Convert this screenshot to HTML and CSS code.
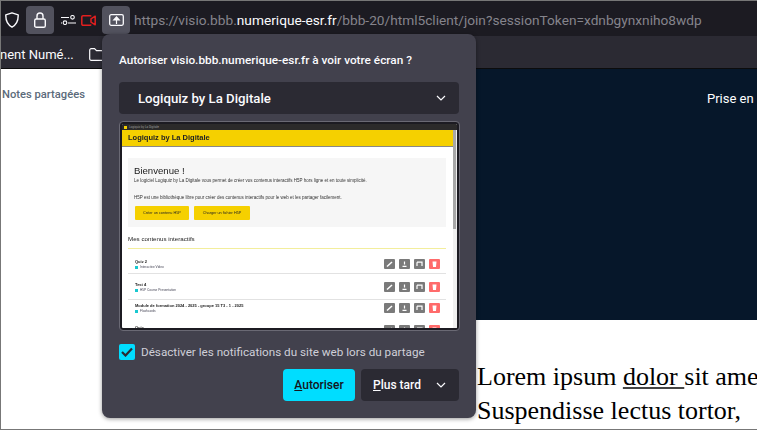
FILE: index.html
```html
<!DOCTYPE html>
<html lang="fr">
<head>
  <meta charset="UTF-8" />
  <title>Partage d'écran</title>
  <link rel="stylesheet" href="styles.css">
</head>
<body>
<svg class="defs" width="0" height="0">
  <symbol id="i-edit" viewBox="0 0 11 10"><path d="M3 7.5 L8 3" stroke="#fff" stroke-width="1.5"/></symbol>
  <symbol id="i-down" viewBox="0 0 11 10"><path d="M5.5 2.5 V5.5 M3.5 7.3 H7.5" stroke="#fff" stroke-width="1.2"/></symbol>
  <symbol id="i-view" viewBox="0 0 11 10"><path d="M3 3.2 H8 V7 M3 7 V3.2" stroke="#fff" stroke-width="1.2" fill="none"/></symbol>
  <symbol id="i-del" viewBox="0 0 11 10"><path d="M3.5 2.5 H7.5 L7 8 H4 Z" fill="#fff"/></symbol>
</svg>
<div class="window">
  <div class="toolbar">
    <svg class="shield" width="14" height="16" viewBox="0 0 14 16"><path d="M7 .8 L13.2 2.8 C13.4 8.5 11.5 12.8 7 15.2 C2.5 12.8 .6 8.5 .8 2.8 Z" fill="none" stroke="#fbfbfe" stroke-width="1.4" stroke-linejoin="round"/></svg>
    <div class="tool-btn lock-btn">
      <svg width="12" height="16" viewBox="0 0 12 16"><path d="M3 7 V4 a3 3 0 0 1 6 0 V7" fill="none" stroke="#fbfbfe" stroke-width="1.4"/><rect x=".7" y="7" width="10.6" height="8.3" rx="1.6" fill="none" stroke="#fbfbfe" stroke-width="1.4"/></svg>
    </div>
    <svg class="perm" width="15" height="10" viewBox="0 0 15 10"><path d="M0 2.5 H8 M0 8 H1 M7 8 H15" stroke="#fbfbfe" stroke-width="1.2" fill="none"/><circle cx="11.5" cy="2.3" r="1.8" fill="none" stroke="#fbfbfe" stroke-width="1.1"/><circle cx="4" cy="7.7" r="1.8" fill="none" stroke="#fbfbfe" stroke-width="1.1"/></svg>
    <svg class="cam" width="15" height="11" viewBox="0 0 15 11"><path d="M10 1.5 A1 1 0 0 0 9 .8 H2 A1.2 1.2 0 0 0 .8 2 V9 A1.2 1.2 0 0 0 2 10.2 H9 A1 1 0 0 0 10 9.5 M10 3.8 L14.2 1.2 V9.8 L10 7.2 Z" fill="none" stroke="#e21f1f" stroke-width="1.5" stroke-linejoin="round"/></svg>
    <div class="tool-btn share-btn">
      <svg width="15" height="12" viewBox="0 0 15 12"><rect x=".7" y=".7" width="13.6" height="10.6" rx="1.5" fill="none" stroke="#fbfbfe" stroke-width="1.3"/><path d="M7.5 10 V5.5 M4.8 6 L7.5 3 L10.2 6 Z" stroke="#fbfbfe" stroke-width="1.2" fill="#fbfbfe"/></svg>
    </div>
    <div class="url">https://visio.bbb.<span class="host">numerique-esr.fr</span>/bbb-20/html5client/join?sessionToken=xdnbgynxniho8wdp</div>
  </div>

  <div class="bookmarks">
    <span class="bookmark">nent Numé...</span>
    <svg class="folder" width="15" height="13" viewBox="0 0 15 13"><path d="M.7 2.2 A1.5 1.5 0 0 1 2.2 .7 H5.5 L7.5 2.7 H12.8 A1.5 1.5 0 0 1 14.3 4.2 V10.8 A1.5 1.5 0 0 1 12.8 12.3 H2.2 A1.5 1.5 0 0 1 .7 10.8 Z" fill="none" stroke="#fbfbfe" stroke-width="1.2"/></svg>
  </div>

  <div class="page">
    <div class="sidebar">Notes partagées</div>
    <div class="main">
      <div class="banner"><span class="banner-text">Prise en</span></div>
      <div class="lorem">
        <p>Lorem ipsum <u>dolor </u>sit amet</p>
        <p>Suspendisse lectus tortor,</p>
      </div>
    </div>
  </div>

  <div class="popup">
    <h1>Autoriser visio.bbb.numerique-esr.fr à voir votre écran ?</h1>
    <div class="select">
      <span>Logiquiz by La Digitale</span>
      <svg width="10" height="6" viewBox="0 0 10 6"><path d="M1 1 L5 5 L9 1" fill="none" stroke="#fbfbfe" stroke-width="1.2"/></svg>
    </div>

    <div class="preview">
      <div class="pv-title"><i></i><span>Logiquiz by La Digitale</span></div>
      <div class="pv-body">
        <div class="pv-content">
          <div class="pv-head">Logiquiz by La Digitale</div>
          <div class="pv-hero">
            <div class="pv-welcome">Bienvenue !</div>
            <div class="pv-line">Le logiciel Logiquiz by La Digitale vous permet de créer vos contenus interactifs H5P hors ligne et en toute simplicité.</div>
            <div class="pv-line pv-line2">H5P est une bibliothèque libre pour créer des contenus interactifs pour le web et les partager facilement.</div>
            <div class="pv-actions">
              <span class="pv-cta">Créer un contenu H5P</span>
              <span class="pv-cta pv-cta-wide">Charger un fichier H5P</span>
            </div>
          </div>
          <div class="pv-sub">Mes contenus interactifs</div>
          <div class="pv-row pv-row1">
            <div class="pv-info"><b>Quiz 2</b><em>Interactive Video</em></div>
            <div class="pv-btns">
              <s><svg><use href="#i-edit"/></svg></s><s><svg><use href="#i-down"/></svg></s><s><svg><use href="#i-view"/></svg></s><s class="del"><svg><use href="#i-del"/></svg></s>
            </div>
          </div>
          <div class="pv-row pv-row2">
            <div class="pv-info"><b>Test 4</b><em>H5P Course Presentation</em></div>
            <div class="pv-btns">
              <s><svg><use href="#i-edit"/></svg></s><s><svg><use href="#i-down"/></svg></s><s><svg><use href="#i-view"/></svg></s><s class="del"><svg><use href="#i-del"/></svg></s>
            </div>
          </div>
          <div class="pv-row pv-row3">
            <div class="pv-info"><b>Module de formation 2024 - 2025 - groupe 15 T3 - 1 - 2025</b><em>Flashcards</em></div>
            <div class="pv-btns">
              <s><svg><use href="#i-edit"/></svg></s><s><svg><use href="#i-down"/></svg></s><s><svg><use href="#i-view"/></svg></s><s class="del"><svg><use href="#i-del"/></svg></s>
            </div>
          </div>
          <div class="pv-row pv-row3">
            <div class="pv-info"><b>Quiz</b></div>
            <div class="pv-btns">
              <s><svg><use href="#i-edit"/></svg></s><s><svg><use href="#i-down"/></svg></s><s><svg><use href="#i-view"/></svg></s><s class="del"><svg><use href="#i-del"/></svg></s>
            </div>
          </div>
        </div>
        <div class="pv-scroll"></div>
      </div>
    </div>

    <label class="check">
      <span class="box"><svg width="12" height="10" viewBox="0 0 12 10"><path d="M1 5 L4.5 8.5 L11 1.5" fill="none" stroke="#2b2a33" stroke-width="2.2"/></svg></span>
      <span>Désactiver les notifications du site web lors du partage</span>
    </label>

    <div class="actions">
      <button class="allow"><u>A</u>utoriser</button>
      <button class="later"><span><u>P</u>lus tard</span>
        <svg width="10" height="6" viewBox="0 0 10 6"><path d="M1 1 L5 5 L9 1" fill="none" stroke="#fbfbfe" stroke-width="1.2"/></svg>
      </button>
    </div>
  </div>
</div>
</body>
</html>
```

FILE: styles.css
```css
html, body {
  margin: 0;
  height: 100%;
  overflow: hidden;
}
body {
  font-family: Roboto, 'Noto Sans', sans-serif;
}
.defs {
  display: block;
}
.window {
  position: relative;
  box-sizing: border-box;
  width: 757px;
  height: 430px;
  border: 1px solid #777;
  border-right: 0;
  display: flex;
  flex-direction: column;
  overflow: hidden;
  background: #fff;
}
.toolbar {
  height: 35px;
  flex: none;
  box-sizing: border-box;
  background: #1c1b22;
  display: flex;
  align-items: center;
  padding: 3px 0 0 4px;
}
.tool-btn {
  width: 28px;
  height: 28px;
  border-radius: 4px;
  background: #52525e;
  display: flex;
  align-items: center;
  justify-content: center;
  flex: none;
}
.lock-btn {
  margin-left: 7px;
}
.perm {
  margin-left: 7px;
}
.cam {
  margin-left: 5px;
}
.share-btn {
  margin-left: 6px;
}
.url {
  margin-left: 4px;
  font-size: 13.7px;
  color: #85848c;
  white-space: nowrap;
}
.host {
  color: #fbfbfe;
}
.bookmarks {
  height: 33px;
  flex: none;
  background: #2b2a33;
  display: flex;
  align-items: center;
  color: #fbfbfe;
  font-size: 13px;
  border-bottom: 1px solid #0c0c0d;
  box-sizing: border-box;
  padding-top: 4px;
}
.bookmark {
  margin-left: -1px;
}
.folder {
  margin-left: 15px;
}
.page {
  flex: 1;
  display: flex;
  min-height: 0;
}
.sidebar {
  width: 475px;
  flex: none;
  padding: 18px 0 0 1px;
  box-sizing: border-box;
  font-size: 11.2px;
  line-height: 15px;
  font-weight: 500;
  color: #5b6a7a;
}
.main {
  flex: 1;
  min-width: 0;
  overflow: hidden;
}
.banner {
  height: 251px;
  background: #06172a;
  display: flex;
  justify-content: flex-end;
  padding-top: 22px;
  box-sizing: border-box;
}
.banner-text {
  color: #fff;
  font-size: 13px;
  width: 50px;
  white-space: nowrap;
}
.lorem {
  margin-top: 40px;
  padding-left: 1px;
  font-family: 'Liberation Serif', serif;
  font-size: 26px;
  line-height: 34px;
  color: #000;
  white-space: nowrap;
}
.lorem p {
  margin: 0;
}
.lorem u {
  text-decoration-color: #444;
}

.popup {
  position: absolute;
  left: 101px;
  top: 33px;
  width: 374px;
  height: 384px;
  box-sizing: border-box;
  background: #42414d;
  border-radius: 8px;
  box-shadow: 0 1px 4px rgba(0,0,0,0.4);
  padding: 17px 17px 0;
  color: #fbfbfe;
}
.popup h1 {
  margin: 0;
  font-size: 11.8px;
  font-weight: 500;
  line-height: 18px;
}
.select {
  margin-top: 13px;
  height: 32px;
  background: #2b2a33;
  border-radius: 4px;
  display: flex;
  align-items: center;
  justify-content: space-between;
  padding: 0 13px 0 19px;
  font-size: 13.2px;
  font-weight: 500;
}
.preview {
  margin: 8px 0 0 1px;
  height: 208px;
  box-sizing: border-box;
  border: 2px solid #1c1b22;
  border-radius: 3px;
  background: #fff;
  display: flex;
  flex-direction: column;
  overflow: hidden;
  outline: 1px solid #6a6974;
}
.pv-title {
  height: 6px;
  flex: none;
  background: #2b2a2a;
  display: flex;
  align-items: center;
  gap: 2px;
  padding-left: 2px;
  font-size: 3px;
  color: #999;
}
.pv-title i {
  width: 3px;
  height: 3px;
  background: #f5d000;
}
.pv-body {
  flex: 1;
  display: flex;
  min-height: 0;
}
.pv-content {
  flex: 1;
  min-width: 0;
  overflow: hidden;
  color: #222;
  filter: blur(0.3px);
}
.pv-scroll {
  width: 4px;
  flex: none;
  background: #f0f0f0;
}
.pv-scroll::before {
  content: "";
  display: block;
  height: 99px;
  width: 3px;
  background: #a8a8a8;
}
.pv-head {
  height: 17px;
  box-sizing: border-box;
  background: #f5d000;
  border-bottom: 1px solid #888;
  padding-left: 6px;
  font-family: 'Liberation Sans', sans-serif;
  font-size: 7.5px;
  font-weight: 700;
  line-height: 16px;
  color: #222;
}
.pv-hero {
  margin: 11px 7px 0 6px;
  height: 69px;
  box-sizing: border-box;
  background: #f6f6f6;
  padding: 7px 6px 0;
  font-family: 'Liberation Sans', sans-serif;
}
.pv-welcome {
  font-size: 9.6px;
  line-height: 12px;
}
.pv-line {
  margin-top: 1px;
  font-size: 4.5px;
  line-height: 6px;
  white-space: nowrap;
  color: #333;
}
.pv-line2 {
  margin-top: 11px;
}
.pv-actions {
  display: flex;
  gap: 5px;
  margin: 5px 0 0 1px;
}
.pv-cta {
  width: 54px;
  height: 14px;
  background: #f5d000;
  border-radius: 1px;
  font-size: 3.8px;
  line-height: 14px;
  text-align: center;
  white-space: nowrap;
}
.pv-cta-wide {
  width: 56px;
}
.pv-sub {
  margin: 8px 7px 0 6px;
  height: 13px;
  border-bottom: 1px solid #f3ee9c;
  font-family: 'Liberation Sans', sans-serif;
  font-size: 6.2px;
  line-height: 8px;
}
.pv-row {
  margin: 0 7px 0 6px;
  box-sizing: border-box;
  border-bottom: 1px solid #e2e2e2;
  display: flex;
  align-items: flex-start;
  justify-content: space-between;
  padding: 0 6px 0 7px;
  font-family: 'Liberation Sans', sans-serif;
}
.pv-row1 {
  height: 25px;
  padding-top: 10px;
}
.pv-row2 {
  height: 26px;
  padding-top: 8px;
}
.pv-row3 {
  height: 22px;
  padding-top: 3px;
  border-bottom: 0;
}
.pv-info b {
  display: block;
  font-size: 4px;
  line-height: 5px;
}
.pv-info em {
  display: flex;
  align-items: center;
  gap: 2px;
  font-style: normal;
  font-size: 3.2px;
  line-height: 6px;
  color: #445;
}
.pv-info em::before {
  content: "";
  width: 3px;
  height: 3px;
  background: #19c8d0;
}
.pv-btns {
  display: flex;
  gap: 4px;
}
.pv-btns s {
  width: 11px;
  height: 10px;
  background: #7a7a7a;
  border-radius: 1px;
}
.pv-btns svg {
  display: block;
  width: 11px;
  height: 10px;
}
.pv-btns .del {
  background: #ff6b6b;
}
.check {
  margin: 14px 0 0 0;
  display: flex;
  align-items: center;
  gap: 6px;
  font-size: 11.7px;
  color: #cfcfd8;
  line-height: 16px;
}
.box {
  width: 16px;
  height: 16px;
  border-radius: 2px;
  background: #00ddff;
  display: flex;
  align-items: center;
  justify-content: center;
}
.actions {
  margin-top: 9px;
  display: flex;
  justify-content: flex-end;
  gap: 6px;
}
.actions button {
  height: 32px;
  border: 0;
  border-radius: 4px;
  font-family: inherit;
  font-size: 12px;
  font-weight: 500;
  padding: 0;
}
.allow {
  width: 72px;
  background: #00ddff;
  color: #15141a;
}
.later {
  width: 98px;
  background: #2b2a33;
  color: #fbfbfe;
  display: flex;
  align-items: center;
  justify-content: space-between;
  padding: 0 13px 0 12px !important;
}
```
